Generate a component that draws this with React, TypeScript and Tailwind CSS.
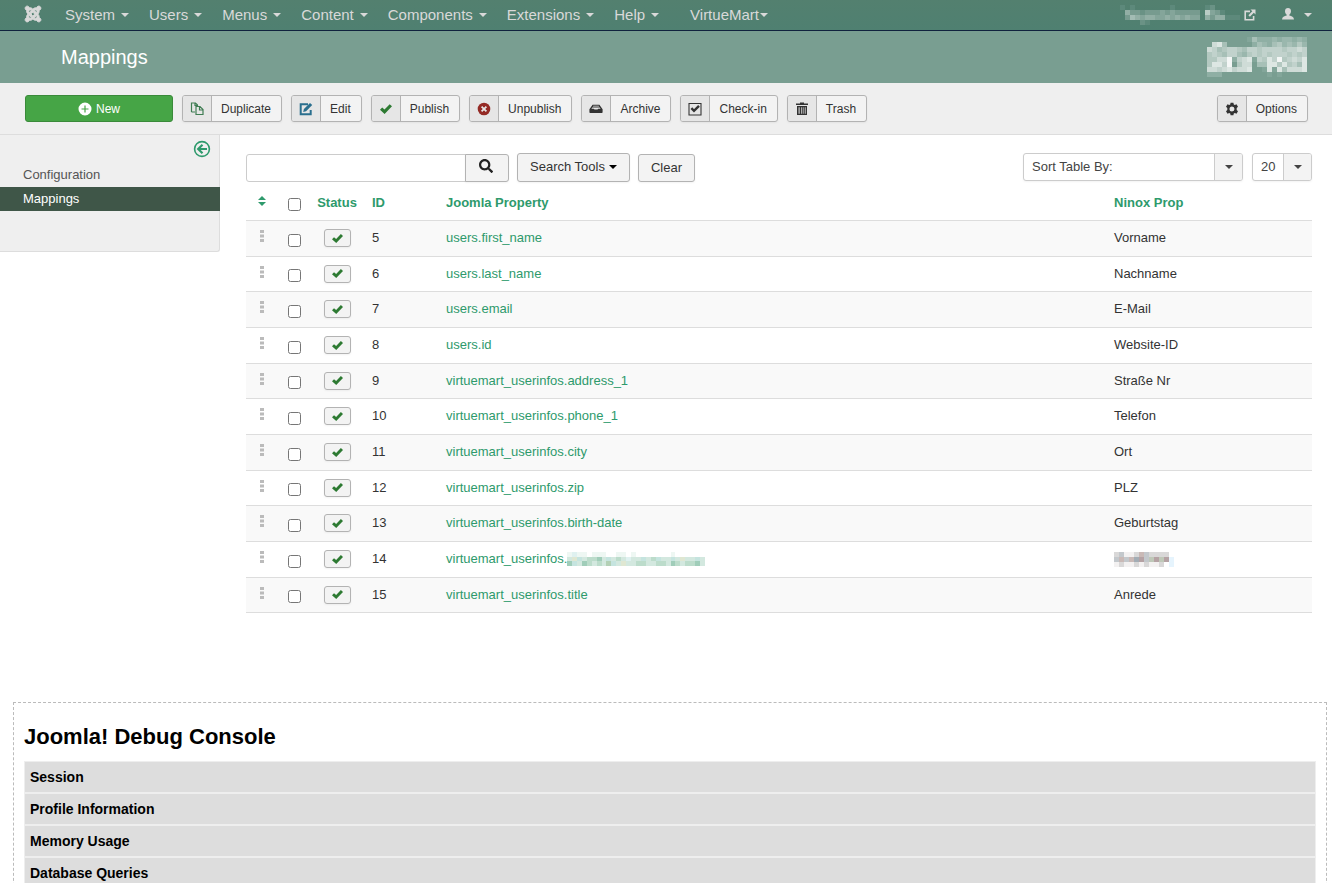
import { memo, ReactNode } from 'react';
import { FaJoomla, FaSearch } from 'react-icons/fa';

interface Mapping {
    id: number;
    property: string;
    ninox: string;
    masked?: boolean;
}

interface MosaicProps {
    rows: string[];
    palette: Record<string, string>;
    className: string;
}

const MENU_ITEMS = ['System', 'Users', 'Menus', 'Content', 'Components', 'Extensions', 'Help'];

const MAPPINGS: Mapping[] = [
    { id: 5, property: 'users.first_name', ninox: 'Vorname' },
    { id: 6, property: 'users.last_name', ninox: 'Nachname' },
    { id: 7, property: 'users.email', ninox: 'E-Mail' },
    { id: 8, property: 'users.id', ninox: 'Website-ID' },
    { id: 9, property: 'virtuemart_userinfos.address_1', ninox: 'Straße Nr' },
    { id: 10, property: 'virtuemart_userinfos.phone_1', ninox: 'Telefon' },
    { id: 11, property: 'virtuemart_userinfos.city', ninox: 'Ort' },
    { id: 12, property: 'virtuemart_userinfos.zip', ninox: 'PLZ' },
    { id: 13, property: 'virtuemart_userinfos.birth-date', ninox: 'Geburtstag' },
    { id: 14, property: 'virtuemart_userinfos.', ninox: '', masked: true },
    { id: 15, property: 'virtuemart_userinfos.title', ninox: 'Anrede' },
];

const DEBUG_SECTIONS = ['Session', 'Profile Information', 'Memory Usage', 'Database Queries'];

const SITE_PALETTE = {
    '1': '#5d897b', '2': '#6a9285', '3': '#779b8f', '4': '#84a59a', '5': '#92afa5', '6': '#a3bcb4', '7': '#b9ccc5',
};
const SITE_ROWS = [
    '101000000010000001200000',
    '053323334343333307431000',
    '036545544545454405355111',
    '000021000000000000000000',
];

const LOGO_PALETTE = {
    '1': '#83a69a', '2': '#8fafa4', '3': '#9ab7ad', '4': '#a7c0b7', '5': '#b4c9c1',
    '6': '#c1d2cc', '7': '#cfdcd7', '8': '#dde7e3', '9': '#f4f7f6',
};
const LOGO_ROWS = [
    '00000000142223233232',
    '07840000024324534353',
    '76456654665666656676',
    '56546643565656665656',
    '55779267816586956768',
    '58869057704488585648',
    '77678677800181847778',
    '22200000000010100000',
];

const PROPERTY_PALETTE = {
    a: '#eef7f3', b: '#d3e8df', c: '#bcdccb', d: '#a0cdb9', e: '#c5e4df', f: '#dfe7d2', g: '#b3d0b5', h: '#dff1f0',
};
const PROPERTY_ROWS = [
    'ahaa0aaa00aa0a0000000a000000',
    'bfebccdbebcbhbbebcebbebfbbeb',
    'debdcbcbgebfbbccbbccbdcbccdb',
];

const NINOX_PALETTE = {
    a: '#f3f1f1', b: '#d9d8d8', c: '#c3c8cc', d: '#c9b9b6', e: '#b5a2a4', f: '#a3adb5', g: '#bfc8b8', h: '#e6f4fd',
};
const NINOX_ROWS = [
    'bcaabdcbbbb0',
    'cdcdfecgegeh',
    'abaababaab0h',
];

/** Coarse block pattern that hides private names */
const Mosaic = memo(({ rows, palette, className }: MosaicProps) => (
    <svg
        className={className}
        viewBox={`0 0 ${rows[0].length} ${rows.length}`}
        preserveAspectRatio="none"
        shapeRendering="crispEdges"
        aria-hidden="true"
    >
        {rows.map((row, y) =>
            row.split('').map((cell, x) =>
                palette[cell] ? <rect key={`${x}-${y}`} x={x} y={y} width="1" height="1" fill={palette[cell]} /> : null
            )
        )}
    </svg>
));

Mosaic.displayName = 'Mosaic';

const Caret = ({ className = '' }: { className?: string }) => (
    <svg className={`inline-block h-1 w-2 align-middle ${className}`} viewBox="0 0 8 4" fill="currentColor" aria-hidden="true">
        <path d="M0 0h8L4 4z" />
    </svg>
);

const Icon = ({ children, className = '' }: { children: ReactNode; className?: string }) => (
    <svg className={`h-[14px] w-[14px] ${className}`} viewBox="0 0 14 14" fill="currentColor" aria-hidden="true">
        {children}
    </svg>
);

const CheckIcon = ({ className }: { className: string }) => (
    <svg className={className} viewBox="0 0 12 12" fill="currentColor" aria-hidden="true">
        <path d="M0 6.8l2.2-2.3 2.3 2L9.7 1.2 12 3.3 4.6 11z" />
    </svg>
);

const NewIcon = () => (
    <Icon>
        <path fillRule="evenodd" d="M7 .5a6.5 6.5 0 1 0 0 13 6.5 6.5 0 0 0 0-13zM6.4 3.5h1.2v2.9h2.9v1.2H7.6v2.9H6.4V7.6H3.5V6.4h2.9z" />
    </Icon>
);

const DuplicateIcon = () => (
    <Icon className="text-[#3f7d53]">
        <path d="M1.5 10V1h4l2 2v1.5M5 10H1.5M5 1v2.5h2.5M6 12.5v-8h4l3 3v5zM9.500 4.500V8H13" fill="none" stroke="currentColor" strokeWidth="1.2" />
    </Icon>
);

const EditIcon = () => (
    <Icon className="text-[#2a6f8e]">
        <path d="M9 2.3H1.7v10h10V8" fill="none" stroke="currentColor" strokeWidth="2" />
        <path d="M4.2 10l.7-3L11 .9l2.2 2.2L7.1 9.2z" />
    </Icon>
);

const UnpublishIcon = () => (
    <Icon className="text-[#942a25]">
        <path d="M7 .7a6.3 6.3 0 1 0 0 12.6A6.3 6.3 0 0 0 7 .7z" />
        <path d="M4.6 4.6l4.8 4.8M9.4 4.6L4.6 9.4" stroke="#e6e6e6" strokeWidth="1.8" />
    </Icon>
);

const ArchiveIcon = () => (
    <Icon>
        <path fillRule="evenodd" d="M3.6 2.8h6.8l3.2 4.4v3q0 .8-.8.8H1.2q-.8 0-.8-.8v-3zM4.3 3.8l-.5.8h6.4l-.5-.8zM3.300 5.500l-.9 1.300h2.400l.7.700h3l.7-.7h2.400l-.9-1.300z" />
    </Icon>
);

const CheckinIcon = () => (
    <Icon>
        <path d="M1 1.5h12v11.5H1z" fill="none" stroke="currentColor" strokeWidth="1.1" />
        <path d="M3.4 6.2L6 8.8l5-5" fill="none" stroke="currentColor" strokeWidth="2.4" />
    </Icon>
);

const TrashIcon = () => (
    <Icon>
        <path d="M5 1.4V.6h4v.8h4v1.5H1V1.4z" />
        <path fillRule="evenodd" d="M2 4h10v9H2zM3.6 5.2v6.6h1V5.2zM6 5.2v6.6h.7V5.2zM7.8 5.2v6.6h.7V5.2zM9.8 5.2v6.6h.8V5.2z" />
    </Icon>
);

const CogIcon = () => (
    <Icon>
        <path
            fillRule="evenodd"
            d="M5.6.8h2.8l.4 1.7 1 .5 1.7-.7 1.5 2.4-1.3 1.2v2.2l1.3 1.2-1.5 2.4-1.7-.7-1 .5-.4 1.7H5.6l-.4-1.7-1-.5-1.7.7L1 9.3l1.3-1.2V5.9L1 4.7l1.5-2.4 1.7.7 1-.5zM7 4.5a2.5 2.5 0 1 0 0 5 2.5 2.5 0 0 0 0-5z"
        />
    </Icon>
);

const TOOLBAR = [
    { label: 'Duplicate', icon: <DuplicateIcon /> },
    { label: 'Edit', icon: <EditIcon /> },
    { label: 'Publish', icon: <CheckIcon className="h-3 w-3 text-[#2d7a32]" /> },
    { label: 'Unpublish', icon: <UnpublishIcon /> },
    { label: 'Archive', icon: <ArchiveIcon /> },
    { label: 'Check-in', icon: <CheckinIcon /> },
    { label: 'Trash', icon: <TrashIcon /> },
];

const ToolbarButton = ({ label, icon }: { label: string; icon: ReactNode }) => (
    <button
        type="button"
        className="flex h-[27px] items-stretch overflow-hidden rounded-[3px] border border-[#b3b3b3] bg-[#f3f3f3] text-xs text-[#333] shadow-xs"
    >
        <span className="flex w-[29px] items-center justify-center border-r border-[#b3b3b3] bg-[#e6e6e6]">{icon}</span>
        <span className="self-center pr-[10px] pl-[9px]">{label}</span>
    </button>
);

const Navbar = () => (
    <nav className="flex h-[31px] items-center border-b border-[#10223e] bg-gradient-to-b from-[#53806f] to-[#4f8071] pr-5 pl-6 text-[15px] text-[#d9d9d9]">
        <a href="#home" aria-label="Control Panel" className="mr-[23px] pb-0.5">
            <FaJoomla className="h-[18px] w-[18px]" stroke="currentColor" strokeWidth="28" />
        </a>
        <ul className="flex gap-5">
            {MENU_ITEMS.map((item) => (
                <li key={item}>
                    <a href="#menu" className="flex items-center gap-[6px]">
                        {item}
                        <Caret />
                    </a>
                </li>
            ))}
        </ul>
        <a href="#virtuemart" className="ml-[31px] flex items-center gap-px">
            VirtueMart
            <Caret />
        </a>
        <a href="#site" aria-label="Open site" className="ml-auto flex items-center gap-1">
            <Mosaic rows={SITE_ROWS} palette={SITE_PALETTE} className="h-5 w-[120px]" />
            <svg className="h-3 w-3" viewBox="0 0 12 12" fill="currentColor" aria-hidden="true">
                <path d="M6 2.4H1.2v8.4h8.4V7" fill="none" stroke="currentColor" strokeWidth="1.6" />
                <path d="M6.5.5h5v5L9.8 3.8 5.9 7.7 4.4 6.2l3.9-3.9z" />
            </svg>
        </a>
        <button type="button" aria-label="User menu" className="ml-[26px] flex items-center gap-[10px]">
            <svg className="mb-0.5 h-3 w-3" viewBox="0 0 12 12" fill="currentColor" aria-hidden="true">
                <path d="M6 0C4.2 0 3 1.2 3 3.200c0 1.500.7 2.800 1.700 3.500v.8C2.300 8 .2 8.700 0 11.500h12c-.2-2.800-2.300-3.500-4.700-4v-.8C8.300 6 9 4.700 9 3.200 9 1.200 7.800 0 6 0z" />
            </svg>
            <Caret />
        </button>
    </nav>
);

const Sidebar = () => (
    <aside className="h-[117px] w-[220px] shrink-0 rounded-br-[3px] border-r border-b border-[#ddd] bg-[#efefef]">
        <div className="flex h-7 items-end justify-end pr-2 pb-[5px]">
            <button type="button" aria-label="Hide sidebar" className="text-[#2e9a6c]">
                <svg className="h-[18px] w-[18px]" viewBox="0 0 18 18" fill="none" stroke="currentColor" aria-hidden="true">
                    <circle cx="9" cy="9" r="7.4" strokeWidth="1.6" />
                    <path d="M14 9H5.5M9.5 4.8L5.2 9l4.3 4.2" strokeWidth="2.2" />
                </svg>
            </button>
        </div>
        <ul className="text-[13px] leading-6">
            <li>
                <a href="#configuration" className="block pl-[23px] text-[#555]">Configuration</a>
            </li>
            <li>
                <a href="#mappings" className="-mr-px block bg-[#3f5648] pl-[23px] text-white">Mappings</a>
            </li>
        </ul>
    </aside>
);

const SelectBox = ({ label, option, className }: { label: string; option: string; className: string }) => (
    <div className={`relative h-7 rounded-[3px] border border-[#ccc] bg-white shadow-xs ${className}`}>
        <select aria-label={label} className="h-full w-full appearance-none pr-7 pl-2 text-[13px] text-[#444] outline-none">
            <option>{option}</option>
        </select>
        <span className="pointer-events-none absolute inset-y-0 right-0 flex w-7 items-center justify-center rounded-r-[2px] border-l border-[#ccc] bg-[#f3f3f3] text-[#444]">
            <Caret />
        </span>
    </div>
);

const FilterBar = () => (
    <div className="flex items-end">
        <div className="flex h-7">
            <input
                type="text"
                aria-label="Search"
                className="w-[220px] rounded-l-[3px] border border-[#ccc] bg-white px-2 text-[13px] outline-none"
            />
            <button
                type="button"
                aria-label="Search"
                className="-ml-px flex w-11 items-center justify-center rounded-r-[3px] border border-[#b3b3b3] bg-[#f3f3f3] pr-0.5 pb-1 text-[#222] shadow-xs"
            >
                <FaSearch className="h-[14px] w-[14px]" />
            </button>
        </div>
        <button
            type="button"
            className="ml-2 flex h-[29px] items-center gap-1 rounded-[3px] border border-[#b3b3b3] bg-[#f3f3f3] px-3 pb-0.5 text-[13px] text-[#333] shadow-xs"
        >
            Search Tools
            <Caret className="text-black" />
        </button>
        <button
            type="button"
            className="ml-2 h-7 rounded-[3px] border border-[#b3b3b3] bg-[#f3f3f3] px-3 text-[13px] text-[#333] shadow-xs"
        >
            Clear
        </button>
        <div className="mb-px ml-auto flex gap-[9px]">
            <SelectBox label="Sort Table By" option="Sort Table By:" className="w-[220px]" />
            <SelectBox label="List limit" option="20" className="w-[60px]" />
        </div>
    </div>
);

const MappingRow = memo(({ mapping }: { mapping: Mapping }) => (
    <tr className="h-9 border-b border-[#ddd] odd:bg-[#f9f9f9] nth-[3n+2]:h-[35px]">
        <td>
            <svg className="mx-auto mb-1 h-3 w-1" viewBox="0 0 4 12" fill="#bbb" aria-hidden="true">
                <path d="M0 0h4v3H0zM0 4.500h4v3H0zM0 9h4v3H0z" />
            </svg>
        </td>
        <td className="pt-1">
            <input type="checkbox" aria-label={`Select mapping ${mapping.id}`} className="mx-auto block h-[13px] w-[13px]" />
        </td>
        <td>
            <button
                type="button"
                aria-label="Unpublish item"
                className="mx-auto flex h-[18px] w-[27px] items-center justify-center rounded-[3px] border border-[#b3b3b3] bg-[#f3f3f3] text-[#2d7a32] shadow-xs"
            >
                <CheckIcon className="h-[11px] w-[11px]" />
            </button>
        </td>
        <td className="px-2">{mapping.id}</td>
        <td className="px-2">
            <a href="#edit" className="inline-flex items-center text-[#2e9a6c]">
                {mapping.property}
                {mapping.masked && <Mosaic rows={PROPERTY_ROWS} palette={PROPERTY_PALETTE} className="h-[14px] w-[138px]" />}
            </a>
        </td>
        <td className="px-2">
            {mapping.masked ? <Mosaic rows={NINOX_ROWS} palette={NINOX_PALETTE} className="h-[15px] w-[60px]" /> : mapping.ninox}
        </td>
    </tr>
));

MappingRow.displayName = 'MappingRow';

const MappingTable = () => (
    <table className="w-full table-fixed text-left text-[13px] leading-[18px] text-[#333]">
        <colgroup>
            <col className="w-8" />
            <col className="w-8" />
            <col className="w-[54px]" />
            <col className="w-[74px]" />
            <col />
            <col className="w-[206px]" />
        </colgroup>
        <thead>
            <tr className="h-[38px] border-b border-[#ddd] text-[#2e9a6c]">
                <th>
                    <svg className="mx-auto h-[10px] w-2" viewBox="0 0 8 10" fill="currentColor" aria-label="Ordering">
                        <path d="M4 0l4 4H0zM0 6h8l-4 4z" />
                    </svg>
                </th>
                <th className="pt-2">
                    <input type="checkbox" aria-label="Check all items" className="mx-auto block h-[13px] w-[13px]" />
                </th>
                <th className="pt-1 text-center">Status</th>
                <th className="px-2 pt-1">ID</th>
                <th className="px-2 pt-1">Joomla Property</th>
                <th className="px-2 pt-1">Ninox Prop</th>
            </tr>
        </thead>
        <tbody>
            {MAPPINGS.map((mapping) => (
                <MappingRow key={mapping.id} mapping={mapping} />
            ))}
        </tbody>
    </table>
);

const DebugConsole = () => (
    <section className="mt-[89px] mr-[5px] ml-[13px] border border-dashed border-[#bbb] px-[10px] pt-5 pb-4 text-black">
        <h1 className="mb-[10px] text-[22px] leading-7 font-bold">Joomla! Debug Console</h1>
        {DEBUG_SECTIONS.map((section) => (
            <h3 key={section} className="border border-[#eee] bg-[#ddd] px-[5px] text-sm leading-[30px] font-bold">
                <a href="#debug">{section}</a>
            </h3>
        ))}
    </section>
);

const App = () => {
    return (
        <div className="h-screen overflow-hidden bg-white font-['Liberation_Sans',Arial,sans-serif]">
            <Navbar />
            <header className="flex h-[52px] items-center justify-between bg-[#799e91] pr-[25px] pl-[61px]">
                <h1 className="text-xl text-white">Mappings</h1>
                <Mosaic rows={LOGO_ROWS} palette={LOGO_PALETTE} className="h-10 w-[100px]" />
            </header>
            <div className="flex items-center gap-[9px] border-b border-[#ddd] bg-[#efefef] py-3 pr-6 pl-[25px]">
                <button
                    type="button"
                    className="flex h-[27px] w-[148px] items-center justify-center gap-1 rounded-[3px] border border-[#3a8a3a] bg-[#46a546] text-xs text-white"
                >
                    <NewIcon />
                    New
                </button>
                {TOOLBAR.map(({ label, icon }) => (
                    <ToolbarButton key={label} label={label} icon={icon} />
                ))}
                <div className="ml-auto">
                    <ToolbarButton label="Options" icon={<CogIcon />} />
                </div>
            </div>
            <div className="flex items-start">
                <Sidebar />
                <main className="min-w-0 flex-1 pt-[18px] pr-5 pl-[26px]">
                    <FilterBar />
                    <MappingTable />
                </main>
            </div>
            <DebugConsole />
        </div>
    );
};

export default App;
